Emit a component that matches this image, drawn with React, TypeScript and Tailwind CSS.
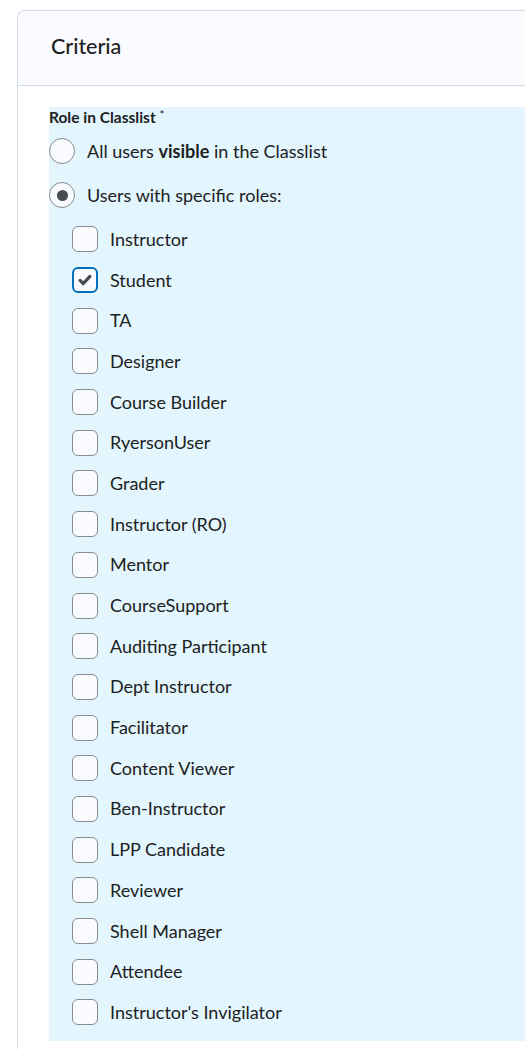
const roles = [
  "Instructor",
  "Student",
  "TA",
  "Designer",
  "Course Builder",
  "RyersonUser",
  "Grader",
  "Instructor (RO)",
  "Mentor",
  "CourseSupport",
  "Auditing Participant",
  "Dept Instructor",
  "Facilitator",
  "Content Viewer",
  "Ben-Instructor",
  "LPP Candidate",
  "Reviewer",
  "Shell Manager",
  "Attendee",
  "Instructor's Invigilator",
]

function Radio({ checked }: { checked?: boolean }) {
  return (
    <span className="flex h-[26px] w-[26px] shrink-0 items-center justify-center rounded-full border border-[#868c8f] bg-[#f9fbff]">
      {checked && <span className="h-[11px] w-[11px] rounded-full bg-[#494c4e]" />}
    </span>
  )
}

function Checkbox({ checked }: { checked?: boolean }) {
  return (
    <span
      className={`flex h-[26px] w-[26px] shrink-0 items-center justify-center rounded-[6px] bg-[#f9fbff] ${
        checked ? "border-2 border-[#006fbf]" : "border border-[#868c8f]"
      }`}
    >
      {checked && (
        <svg viewBox="0 0 18 18" className="h-[16px] w-[16px]">
          <path
            d="M3.5 9.5 L7 13 L14.5 5"
            fill="none"
            stroke="#494c4e"
            strokeWidth="3.6"
            strokeLinecap="round"
            strokeLinejoin="round"
          />
        </svg>
      )}
    </span>
  )
}

export default function App() {
  return (
    <div className="min-h-[1049px] bg-white pl-[17px] pt-[10px] font-['Lato','Liberation_Sans',sans-serif] text-[#202122]">
      <div className="min-h-[1039px] rounded-tl-[8px] border-l border-t border-[#d3d9e3]">
        {/* Header */}
        <div className="flex h-[75px] items-center rounded-tl-[8px] border-b border-[#d3d9e3] bg-[#f9fbff] pb-[3px] pl-[33px]">
          <h2 className="text-[21.5px] font-medium">Criteria</h2>
        </div>

        <div className="pl-[31px] pt-[21px]">
          <div className="bg-[#e3f6fe] pb-[8px]">
            <div className="h-[20px] text-[15.5px] font-bold leading-[20px]">
              Role in Classlist <span className="align-top text-[12px] font-normal leading-[16px]">*</span>
            </div>

            <div className="mt-[2px]">
              <label className="flex h-[44px] items-center gap-[12px]">
                <Radio />
                <span className="text-[18px]">
                  All users <b>visible</b> in the Classlist
                </span>
              </label>
              <label className="flex h-[44px] items-center gap-[12px]">
                <Radio checked />
                <span className="text-[18px]">Users with specific roles:</span>
              </label>
            </div>

            <div className="mt-[2px] pl-[23px]">
              {roles.map((role) => (
                <label key={role} className="flex h-[40.7px] items-center gap-[12px]">
                  <Checkbox checked={role === "Student"} />
                  <span className="text-[18px]">{role}</span>
                </label>
              ))}
            </div>
          </div>
        </div>
      </div>
    </div>
  )
}
